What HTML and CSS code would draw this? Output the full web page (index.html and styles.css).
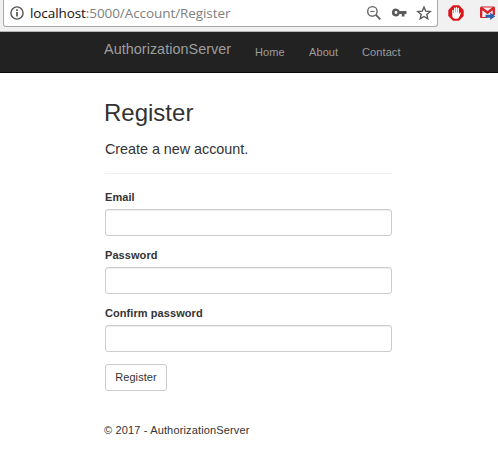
FILE: index.html
```html
<!DOCTYPE html>
<html lang="en">
<head>
<meta charset="utf-8">
<title>Register - AuthorizationServer</title>
<link rel="stylesheet" href="styles.css">
</head>
<body>
<div class="toolbar">
  <div class="omnibox">
    <svg class="info" width="14" height="14" viewBox="0 0 14 14" fill="none" stroke="#555"><circle cx="7" cy="7" r="6.1" stroke-width="1.4"/><path d="M7 6v4.6M7 3.2v1.7" stroke-width="1.7"/></svg>
    <span class="url"><span class="host">localhost</span>:5000/Account/Register</span>
    <svg class="tool" width="16" height="16" viewBox="0 0 16 16" fill="none" stroke="#5a5a5a"><circle cx="6.4" cy="6.4" r="4.7" stroke-width="1.3"/><path d="M4.3 6.4h4.2" stroke-width="1"/><path d="M9.9 9.9l4.4 4.4" stroke-width="1.7"/></svg>
    <svg class="tool key" width="16" height="16" viewBox="0 0 16 16"><path fill="#5a5a5a" fill-rule="evenodd" d="M5 3.500a4 4 0 1 0 3.600 5.500h2.200V11.500h2.700V9H15.500V6H8.600A4 4 0 0 0 5 3.500zm0 2.600a1.400 1.400 0 1 1 0 2.800 1.400 1.400 0 0 1 0-2.800z"/></svg>
    <svg class="tool star" width="16" height="16" viewBox="0 0 16 16"><path fill="none" stroke="#5a5a5a" stroke-width="1.4" d="M8 2l1.700 4.100 4.500.4-3.400 2.900 1 4.400L8 11.500l-3.800 2.300 1-4.400-3.400-2.900 4.500-.4z"/></svg>
  </div>
  <svg class="blocker" width="16" height="16" viewBox="0 0 16 16"><path fill="#d9161b" d="M5 .3h6L15.700 5v6L11 15.700H5L.3 11V5z"/><path fill="#fff" d="M4.200 5.100q.7-.7 1.300 0V8h.5V3q.7-.8 1.400 0v4.500h.4V2.400q.7-.8 1.400 0v5.100h.4V3.200q.7-.8 1.400 0v6l.8-1.500q.8-.4 1.200.2l-2.200 4.900q-.6 1-2 1H7.200q-2.700 0-3-3z"/></svg>
  <svg class="mail" width="16" height="16" viewBox="0 0 16 16"><path fill="#f7eeee" d="M1 2h13v11H1z"/><path fill="#d5252b" d="M0 3q0-1.500 1.500-1.500L7.500 6l6-4.500Q15 1.500 15 3v7h-2.300V5.300L7.500 9.300 2.300 5.300V13H1q-1 0-1-1z"/><path fill="none" stroke="#d5252b" d="M1.500 2h12M1.500 12.500h6"/><path fill="#315fae" d="M5.500 9.700h4.700V7.500L15.300 11.300 10.200 15v-2.200H5.500z"/></svg>
</div>
<nav class="navbar">
  <a class="brand">AuthorizationServer</a>
  <a class="link home">Home</a>
  <a class="link about">About</a>
  <a class="link contact">Contact</a>
</nav>
<main class="container">
  <h2>Register</h2>
  <form>
    <h4>Create a new account.</h4>
    <hr>
    <div class="group"><label for="email">Email</label><input id="email" type="email"></div>
    <div class="group"><label for="password">Password</label><input id="password" type="password"></div>
    <div class="group"><label for="confirm">Confirm password</label><input id="confirm" type="password"></div>
    <button type="button">Register</button>
  </form>
  <footer>© 2017 - AuthorizationServer</footer>
</main>
</body>
</html>
```
FILE: styles.css
```css
* { box-sizing: border-box; }
body {
  margin: 0;
  height: 462px;
  overflow: hidden;
  background: #fff;
  color: #333;
  font: 11px/16px "Liberation Sans", Arial, sans-serif;
}
.toolbar {
  display: flex;
  height: 32px;
  padding-left: 3px;
  background: #f1f1f1;
  border-bottom: 1px solid #b5b5b5;
}
.omnibox {
  display: flex;
  align-items: center;
  width: 435px;
  height: 27px;
  padding-left: 6px;
  background: #fff;
  border: 1px solid #a9a9a9;
  border-top: 0;
  border-radius: 0 0 3px 3px;
}
.info { margin-right: 6px; }
.url {
  width: 336px;
  color: #808080;
  font: 13.5px/20px "Open Sans", sans-serif;
  letter-spacing: -.08px;
  white-space: nowrap;
}
.host { color: #111; }
.tool { flex: none; }
.key { margin-left: 9px; }
.star { margin-left: 9px; }
.blocker { margin: 5px 0 0 10px; flex: none; }
.mail { margin: 5px 0 0 16px; flex: none; }
.navbar {
  display: flex;
  height: 41px;
  padding: 9px 0 0 104px;
  background: #222;
  border-bottom: 1px solid #080808;
  color: #9d9d9d;
}
.brand { width: 151px; font-size: 14.4px; letter-spacing: .04px; }
.link { padding-top: 3px; letter-spacing: .1px; }
.home { width: 54px; }
.about { width: 53px; }
.container { width: 287px; margin-left: 105px; padding-top: 26px; }
h2 { margin: 0 0 0 -1px; font-size: 24px; line-height: 28px; font-weight: 400; }
h4 { margin: 14px 0 16px; font-size: 14.4px; line-height: 16px; font-weight: 400; letter-spacing: -.04px; }
hr { height: 1px; margin: 0 0 15px; border: 0; background: #eee; }
.group { margin-bottom: 11px; }
label { display: block; height: 20px; font-weight: 700; letter-spacing: .07px; }
input {
  display: block;
  width: 287px;
  height: 27px;
  border: 1px solid #ccc;
  border-radius: 3px;
  box-shadow: inset 0 1px 1px rgba(0, 0, 0, .075);
}
button {
  display: block;
  width: 62px;
  height: 27px;
  margin-top: 12px;
  padding: 0 0 1px;
  background: #fff;
  border: 1px solid #ccc;
  border-radius: 3px;
  color: #333;
  font: 11px/16px "Liberation Sans", Arial, sans-serif;
  letter-spacing: .07px;
}
footer { margin-top: 31px; margin-left: -1px; letter-spacing: .15px; }
```
